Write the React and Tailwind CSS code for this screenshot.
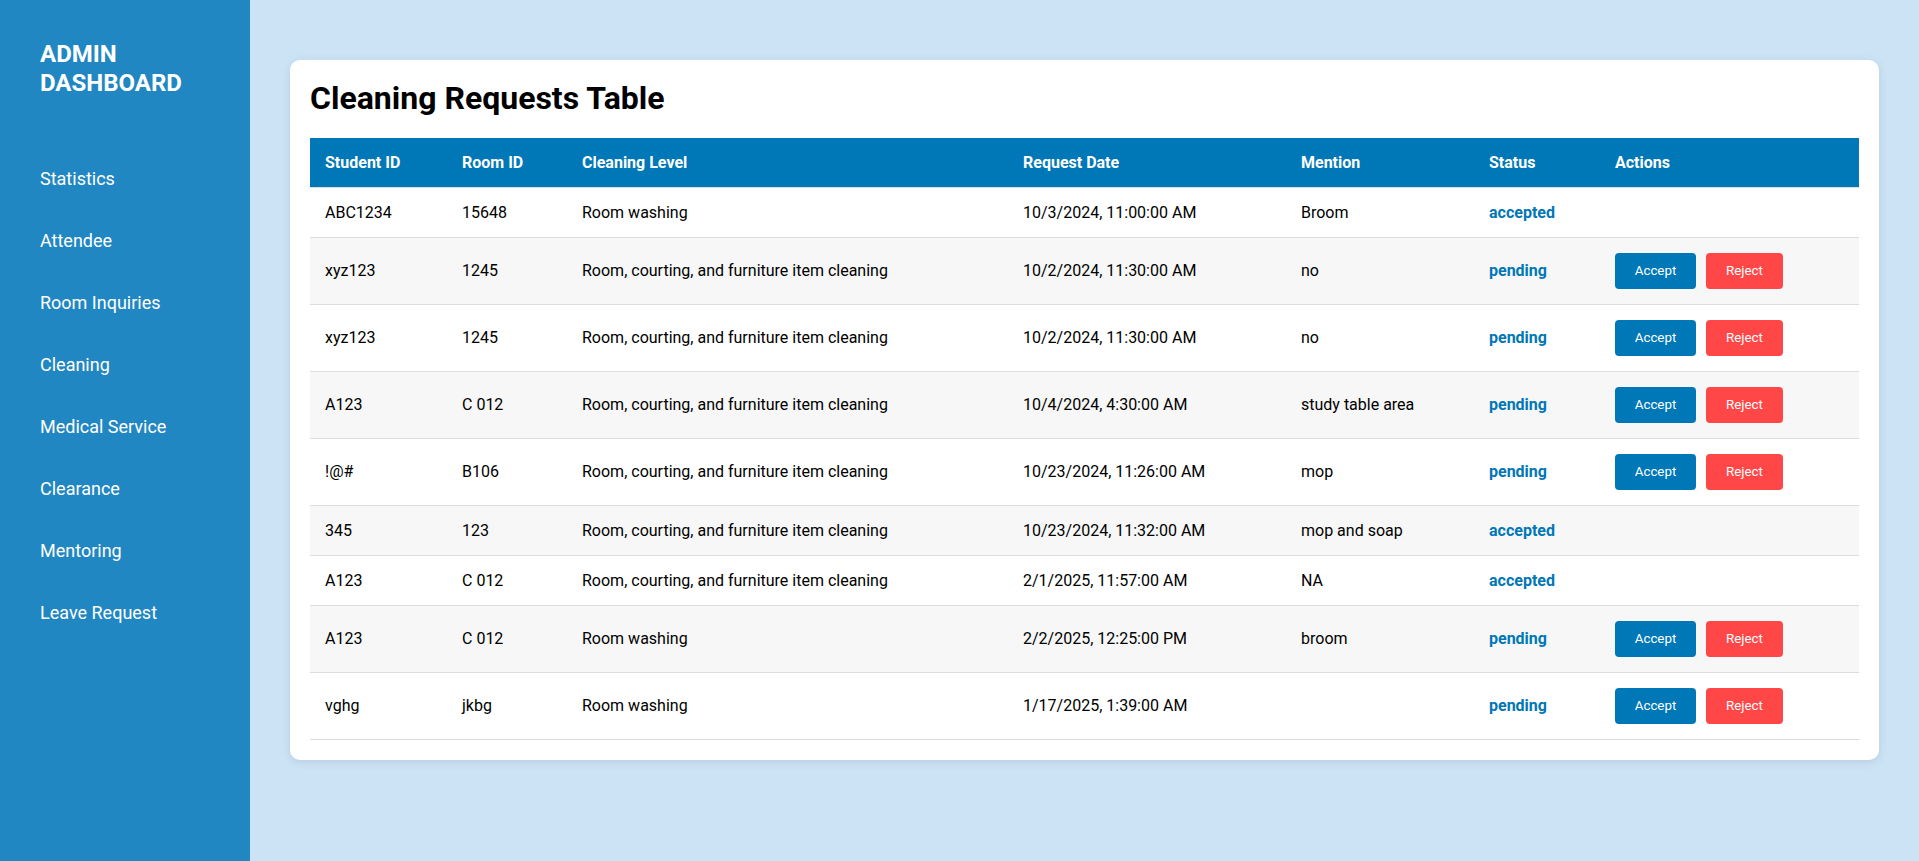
import React from "react";

const navItems = [
  "Statistics",
  "Attendee",
  "Room Inquiries",
  "Cleaning",
  "Medical Service",
  "Clearance",
  "Mentoring",
  "Leave Request",
];

const rows = [
  ["ABC1234", "15648", "Room washing", "10/3/2024, 11:00:00 AM", "Broom", "accepted"],
  ["xyz123", "1245", "Room, courting, and furniture item cleaning", "10/2/2024, 11:30:00 AM", "no", "pending"],
  ["xyz123", "1245", "Room, courting, and furniture item cleaning", "10/2/2024, 11:30:00 AM", "no", "pending"],
  ["A123", "C 012", "Room, courting, and furniture item cleaning", "10/4/2024, 4:30:00 AM", "study table area", "pending"],
  ["!@#", "B106", "Room, courting, and furniture item cleaning", "10/23/2024, 11:26:00 AM", "mop", "pending"],
  ["345", "123", "Room, courting, and furniture item cleaning", "10/23/2024, 11:32:00 AM", "mop and soap", "accepted"],
  ["A123", "C 012", "Room, courting, and furniture item cleaning", "2/1/2025, 11:57:00 AM", "NA", "accepted"],
  ["A123", "C 012", "Room washing", "2/2/2025, 12:25:00 PM", "broom", "pending"],
  ["vghg", "jkbg", "Room washing", "1/17/2025, 1:39:00 AM", "", "pending"],
];

const headers = ["Student ID", "Room ID", "Cleaning Level", "Request Date", "Mention", "Status", "Actions"];

export default function App() {
  return (
    <div
      className="flex min-h-screen bg-[#cce3f6] text-black"
      style={{ fontFamily: "Roboto, 'Noto Sans', Arial, sans-serif" }}
    >
      <aside className="w-[250px] shrink-0 bg-[#2187c3] px-[40px] pt-[40px] text-white">
        <h2 className="text-[24px] font-bold leading-[29px]">
          ADMIN
          <br />
          DASHBOARD
        </h2>
        <ul className="mt-[50px]">
          {navItems.map((item) => (
            <li key={item} className="py-[20px] text-[18px] leading-[22px]">
              {item}
            </li>
          ))}
        </ul>
      </aside>

      <main className="flex-1 px-[40px] pt-[60px]">
        <div className="rounded-[10px] bg-white p-[20px] shadow-[0_2px_10px_rgba(0,0,0,0.1)]">
          <h1 className="mb-[20px] text-[32px] font-bold leading-[37.5px]">Cleaning Requests Table</h1>
          <table className="w-full table-fixed border-collapse text-left text-[16px] leading-[19px]">
            <colgroup>
              <col className="w-[137px]" />
              <col className="w-[120px]" />
              <col className="w-[441px]" />
              <col className="w-[278px]" />
              <col className="w-[188px]" />
              <col className="w-[126px]" />
              <col />
            </colgroup>
            <thead>
              <tr className="bg-[#0077b6] text-white">
                {headers.map((h) => (
                  <th key={h} className="border-b border-[#dddddd] px-[15px] py-[15px] font-bold">
                    {h}
                  </th>
                ))}
              </tr>
            </thead>
            <tbody>
              {rows.map((r, i) => (
                <tr key={i} className={i % 2 === 1 ? "bg-[#f7f7f7]" : "bg-white"}>
                  <td className="border-b border-[#dddddd] px-[15px] py-[15px]">{r[0]}</td>
                  <td className="border-b border-[#dddddd] px-[15px] py-[15px]">{r[1]}</td>
                  <td className="border-b border-[#dddddd] px-[15px] py-[15px]">{r[2]}</td>
                  <td className="border-b border-[#dddddd] px-[15px] py-[15px]">{r[3]}</td>
                  <td className="border-b border-[#dddddd] px-[15px] py-[15px]">{r[4]}</td>
                  <td className="border-b border-[#dddddd] px-[15px] py-[15px] font-bold text-[#0077b6]">{r[5]}</td>
                  <td className="border-b border-[#dddddd] px-[15px] py-[15px]">
                    {r[5] === "pending" && (
                      <div className="flex gap-[10px]">
                        <button className="h-[36px] w-[81px] rounded-[4px] bg-[#0077b6] text-center text-[13.33px] text-white">
                          Accept
                        </button>
                        <button className="h-[36px] w-[77px] rounded-[4px] bg-[#ff4747] text-center text-[13.33px] text-white">
                          Reject
                        </button>
                      </div>
                    )}
                  </td>
                </tr>
              ))}
            </tbody>
          </table>
        </div>
      </main>
    </div>
  );
}
